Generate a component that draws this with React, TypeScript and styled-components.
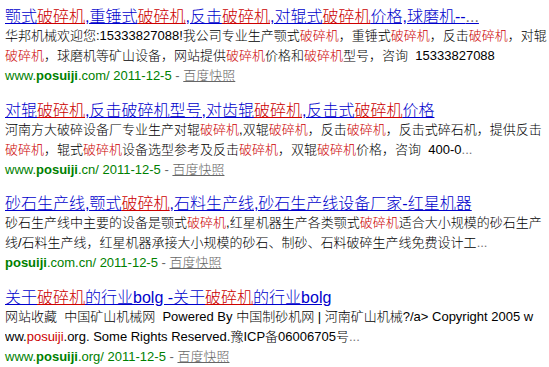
import * as React from 'react';
import styled, { createGlobalStyle } from 'styled-components';

const Global = createGlobalStyle`
  html, body {
    margin: 0;
    padding: 0;
    background: #fff;
  }
  body {
    font-family: "Liberation Sans", "Noto Sans CJK SC", sans-serif;
  }
`;

const Page = styled.div`
  padding: 7px 0 0 5px;
  width: 549px;
  box-sizing: border-box;
`;

const Result = styled.div`
  margin-bottom: 15.6px;
`;

const Title = styled.a`
  display: block;
  height: 19px;
  line-height: 19px;
  font-size: 16px;
  font-weight: 300;
  color: #0000cc;
  text-decoration: underline;
  white-space: nowrap;
  overflow: hidden;
  cursor: pointer;

  em {
    font-style: normal;
    color: #cc0000;
    text-decoration: underline;
  }
`;

const Line = styled.div`
  height: 20px;
  line-height: 20px;
  font-size: 13px;
  font-weight: 300;
  color: #000;
  white-space: pre;
  overflow: hidden;

  em {
    font-style: normal;
    color: #cc0000;
  }
`;

const Dots = styled.span`
  color: #777;
`;

const Url = styled.div`
  height: 19px;
  line-height: 19px;
  font-size: 13px;
  color: #008000;
  white-space: pre;
`;

const Bold = styled.b`
  font-weight: bold;
`;

const Dash = styled.span`
  color: #666;
`;

const Snapshot = styled.a`
  color: #666;
  font-weight: 300;
  text-decoration: underline;
  cursor: pointer;
`;

// "[x]" marks a highlighted keyword, trailing "..." is greyed
function Marked({ text }: { text: string }) {
  const parts = text.split(/(\[[^\]]+\]|\.\.\.$)/).filter(Boolean);
  return (
    <>
      {parts.map((p, i) => {
        if (p.startsWith('[')) return <em key={i}>{p.slice(1, -1)}</em>;
        if (p === '...') return <Dots key={i}>...</Dots>;
        return <React.Fragment key={i}>{p}</React.Fragment>;
      })}
    </>
  );
}

type Item = {
  title: string;
  lines: string[];
  pre: string;
  site: string;
  post: string;
};

const items: Item[] = [
  {
    title: '颚式[破碎机],重锤式[破碎机],反击[破碎机],对辊式[破碎机]价格,球磨机--...',
    lines: [
      '华邦机械欢迎您:15333827088!我公司专业生产颚式[破碎机]，重锤式[破碎机]，反击[破碎机]，对辊',
      '[破碎机]，球磨机等矿山设备，网站提供[破碎机]价格和[破碎机]型号，咨询\u00a0\u00a015333827088',
    ],
    pre: 'www.',
    site: 'posuiji',
    post: '.com/',
  },
  {
    title: '对辊[破碎机],反击破碎机型号,对齿辊[破碎机],反击式[破碎机]价格',
    lines: [
      '河南方大破碎设备厂专业生产对辊[破碎机],双辊[破碎机]，反击[破碎机]，反击式碎石机，提供反击',
      '[破碎机]，辊式[破碎机]设备选型参考及反击[破碎机]，双辊[破碎机]价格，咨询\u00a0\u00a0400-0...',
    ],
    pre: 'www.',
    site: 'posuiji',
    post: '.cn/',
  },
  {
    title: '砂石生产线,颚式[破碎机],石料生产线,砂石生产线设备厂家-红星机器',
    lines: [
      '砂石生产线中主要的设备是颚式[破碎机],红星机器生产各类颚式[破碎机]适合大小规模的砂石生产',
      '线/石料生产线，红星机器承接大小规模的砂石、制砂、石料破碎生产线免费设计工...',
    ],
    pre: '',
    site: 'posuiji',
    post: '.com.cn/',
  },
  {
    title: '关于[破碎机]的行业bolg -关于[破碎机]的行业bolg',
    lines: [
      '网站收藏\u00a0 中国矿山机械网\u00a0 Powered By 中国制砂机网 | 河南矿山机械?/a> Copyright 2005 w',
      'ww.[posuiji].org. Some Rights Reserved.豫ICP备06006705号...',
    ],
    pre: 'www.',
    site: 'posuiji',
    post: '.org/',
  },
];

export default function App() {
  return (
    <Page>
      <Global />
      {items.map((it, i) => (
        <Result key={i}>
          <Title>
            <Marked text={it.title} />
          </Title>
          {it.lines.map((l, j) => (
            <Line key={j}>
              <Marked text={l} />
            </Line>
          ))}
          <Url>
            {it.pre}
            <Bold>{it.site}</Bold>
            {it.post} 2011-12-5 <Dash>-</Dash> <Snapshot>百度快照</Snapshot>
          </Url>
        </Result>
      ))}
    </Page>
  );
}
